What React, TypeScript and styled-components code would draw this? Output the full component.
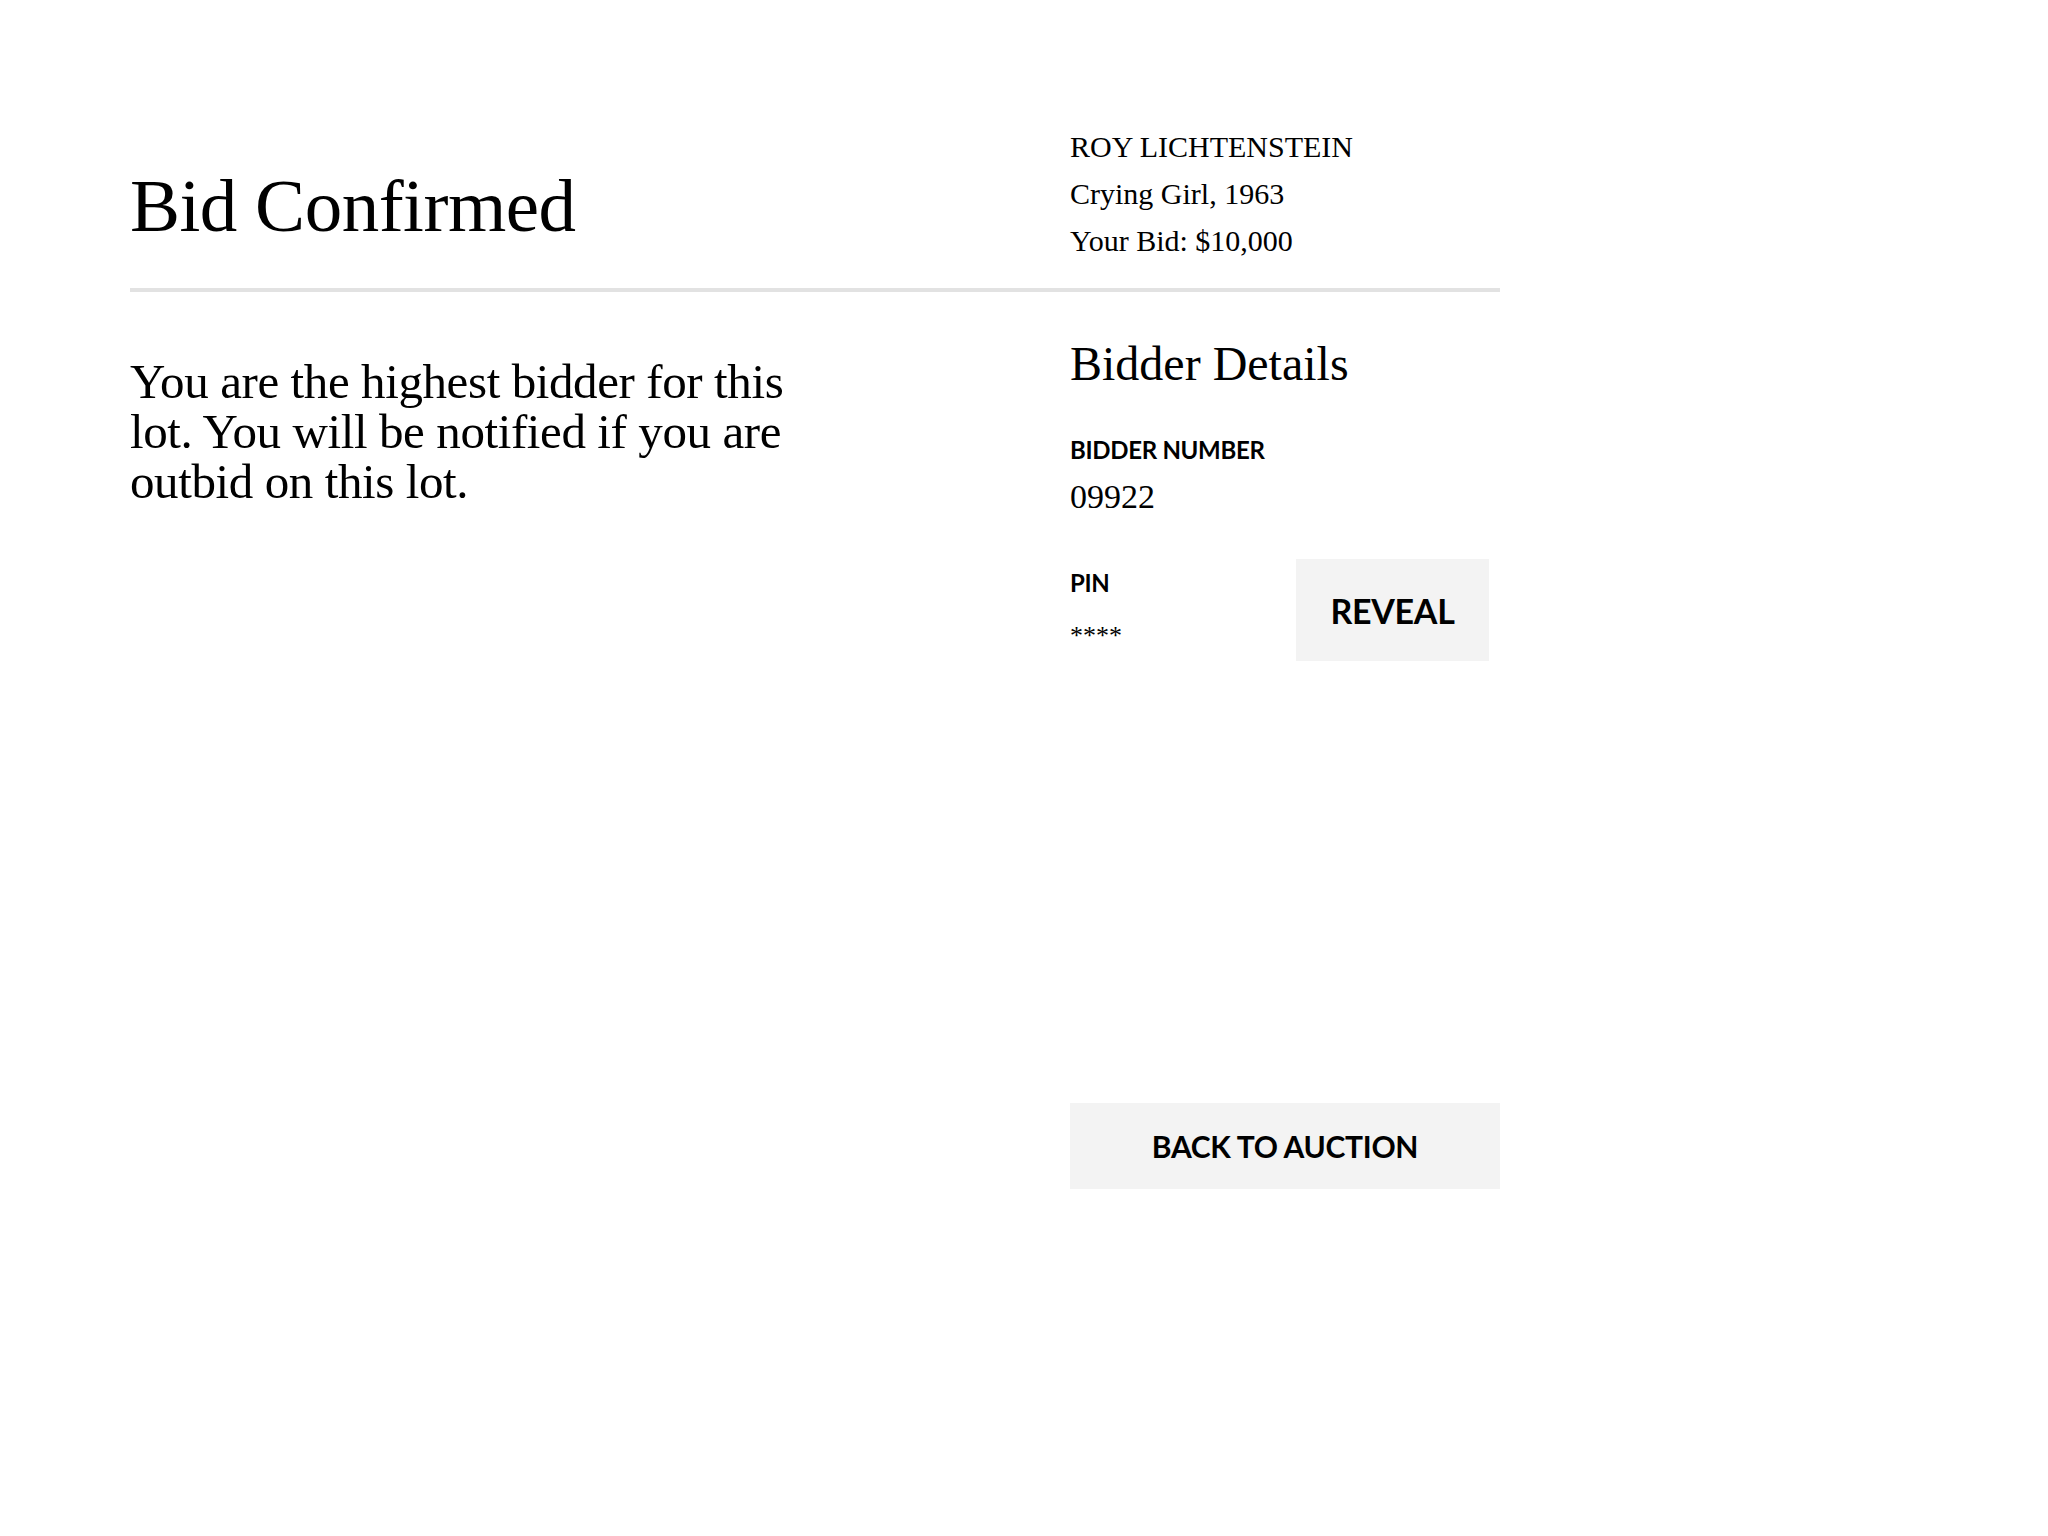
import React from "react";
import styled, { createGlobalStyle } from "styled-components";

const Global = createGlobalStyle`
  html, body { margin: 0; padding: 0; background: #ffffff; }
  body { font-family: "Liberation Serif", serif; color: #000; }
`;

const Page = styled.div`
  padding: 123px 0 0 130px;
  width: 1370px;
`;

const Header = styled.header`
  display: grid;
  grid-template-columns: 940px 430px;
  align-items: end;
  padding-bottom: 24px;
  border-bottom: 4px solid #e2e2e2;
`;

const Title = styled.h1`
  margin: 0 0 21px;
  font-family: "Liberation Serif", serif;
  font-weight: 400;
  font-size: 75px;
  line-height: 1;
  letter-spacing: -0.5px;
`;

const LotInfo = styled.div`
  display: flex;
  flex-direction: column;
  font-size: 30px;
  line-height: 47px;
`;

const Body = styled.section`
  display: grid;
  grid-template-columns: 940px 430px;
  padding-top: 44px;
`;

const Message = styled.p`
  margin: 21px 0 0;
  width: 690px;
  font-size: 49px;
  line-height: 50px;
  letter-spacing: -0.4px;
`;

const Details = styled.div`
  display: flex;
  flex-direction: column;
`;

const SectionTitle = styled.h2`
  margin: 0 0 44px;
  font-weight: 400;
  font-size: 48px;
  line-height: 56px;
`;

const Label = styled.div`
  font-family: "Lato", sans-serif;
  font-weight: 700;
  font-size: 24px;
  line-height: 28px;
  letter-spacing: -0.3px;
`;

const Value = styled.div<{ $small?: boolean }>`
  margin-top: ${(p) => (p.$small ? "19px" : "13px")};
  font-size: ${(p) => (p.$small ? "26px" : "34px")};
  line-height: 40px;
`;

const Field = styled.div<{ $inset?: boolean }>`
  display: flex;
  flex-direction: column;
  padding-top: ${(p) => (p.$inset ? "10px" : "0")};
`;

const PinRow = styled.div`
  display: flex;
  justify-content: space-between;
  align-items: flex-start;
  margin-top: 42px;
  width: 419px;
`;

const GreyButton = styled.button<{ $wide?: boolean }>`
  border: none;
  background: #f3f3f3;
  color: #000;
  font-family: "Lato", sans-serif;
  font-weight: 700;
  cursor: pointer;
  padding: 0;
  width: ${(p) => (p.$wide ? "430px" : "193px")};
  height: ${(p) => (p.$wide ? "86px" : "102px")};
  font-size: ${(p) => (p.$wide ? "30px" : "34px")};
  letter-spacing: -0.3px;
`;

const BackButton = styled(GreyButton)`
  margin-top: 442px;
`;

export default function App() {
  return (
    <>
      <Global />
      <Page>
        <Header>
          <Title>Bid Confirmed</Title>
          <LotInfo>
            <span>ROY LICHTENSTEIN</span>
            <span>Crying Girl, 1963</span>
            <span>Your Bid: $10,000</span>
          </LotInfo>
        </Header>
        <Body>
          <Message>
            You are the highest bidder for this lot. You will be notified if you are outbid on this lot.
          </Message>
          <Details>
            <SectionTitle>Bidder Details</SectionTitle>
            <Field>
              <Label>BIDDER NUMBER</Label>
              <Value>09922</Value>
            </Field>
            <PinRow>
              <Field $inset>
                <Label>PIN</Label>
                <Value $small>****</Value>
              </Field>
              <GreyButton>REVEAL</GreyButton>
            </PinRow>
            <BackButton $wide>BACK TO AUCTION</BackButton>
          </Details>
        </Body>
      </Page>
    </>
  );
}
